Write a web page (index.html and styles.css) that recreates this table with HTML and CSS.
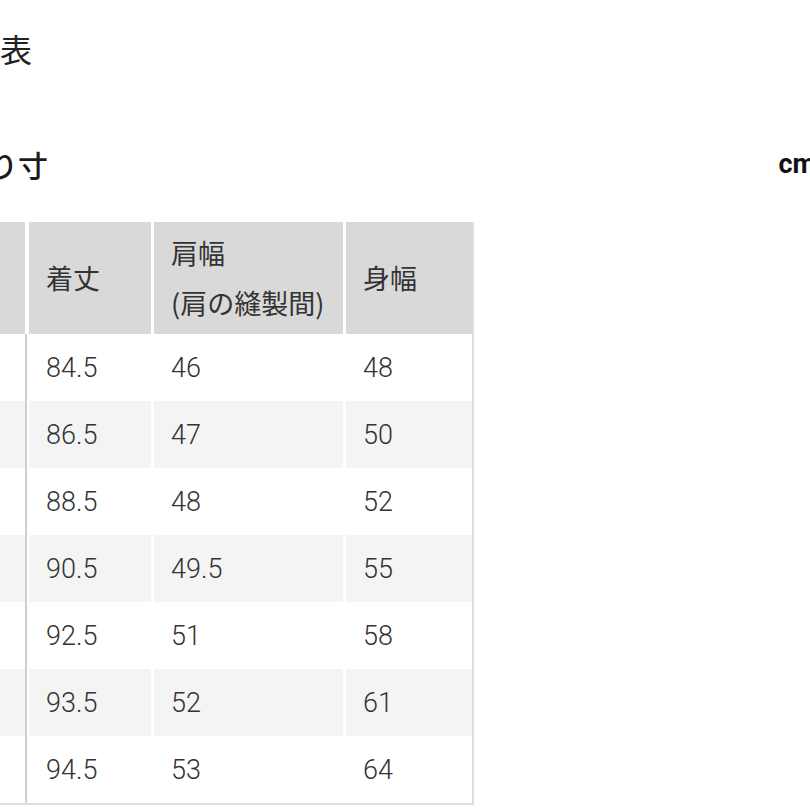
FILE: index.html
```html
<!DOCTYPE html>
<html lang="ja">
<head>
<meta charset="utf-8">
<title>サイズ表</title>
<link rel="stylesheet" href="styles.css">
</head>
<body>
<main class="page">
  <h1 class="title">表</h1>
  <div class="sub">
    <h2 class="sub-title">り寸</h2>
    <span class="unit">cm</span>
  </div>
  <table class="size-table">
    <thead>
      <tr>
        <th class="c0"></th>
        <th class="c1">着丈</th>
        <th class="c2">肩幅<br>(肩の縫製間)</th>
        <th class="c3">身幅</th>
      </tr>
    </thead>
    <tbody>
      <tr><td class="c0"></td><td>84.5</td><td>46</td><td>48</td></tr>
      <tr><td class="c0"></td><td>86.5</td><td>47</td><td>50</td></tr>
      <tr><td class="c0"></td><td>88.5</td><td>48</td><td>52</td></tr>
      <tr><td class="c0"></td><td>90.5</td><td>49.5</td><td>55</td></tr>
      <tr><td class="c0"></td><td>92.5</td><td>51</td><td>58</td></tr>
      <tr><td class="c0"></td><td>93.5</td><td>52</td><td>61</td></tr>
      <tr><td class="c0"></td><td>94.5</td><td>53</td><td>64</td></tr>
    </tbody>
  </table>
</main>
</body>
</html>
```
FILE: styles.css
```css
html, body {
  margin: 0;
  padding: 0;
  background: #fff;
  overflow: hidden;
}

.page {
  width: 810px;
  height: 810px;
  overflow: hidden;
  font-family: "Noto Sans CJK JP", "Noto Sans", sans-serif;
  color: #222;
}

.title {
  margin: 24px 0 0 0;
  font-size: 32px;
  font-weight: 400;
  line-height: 48px;
}

.sub {
  display: flex;
  justify-content: space-between;
  align-items: center;
  margin: 68px -6px 0 0;
  height: 48px;
}

.sub-title {
  margin: 0 0 0 -12px;
  font-size: 30px;
  font-weight: 500;
  line-height: 46px;
  color: #1a1a1a;
}

.unit {
  font-family: Roboto, "Liberation Sans", sans-serif;
  font-weight: 700;
  font-size: 27px;
  line-height: 48px;
  color: #111;
}

.size-table {
  margin-top: 34px;
  border-collapse: separate;
  border-spacing: 0;
  table-layout: fixed;
  width: 474px;
  border-right: 2px solid #dedede;
  border-bottom: 2px solid #dedede;
  font-size: 27px;
  color: #333;
}

.size-table th,
.size-table td {
  box-sizing: border-box;
  padding: 0 0 0 17px;
  text-align: left;
  vertical-align: middle;
  border-left: 3px solid #fff;
}

.size-table th {
  height: 112px;
  background: #d9d9d9;
  font-weight: 400;
  line-height: 50px;
  color: #333;
}

.size-table td {
  height: 67px;
  font-family: Roboto, "Noto Sans", sans-serif;
  font-weight: 300;
  color: #333;
}

.size-table tbody tr:nth-child(even) td {
  background: #f4f4f4;
}

.size-table .c0 {
  width: 27px;
  padding: 0;
  border-left: 0;
  border-right: 2px solid #fff;
}

.size-table td.c0 {
  border-right-color: #cfcfcf;
}

.size-table .c1 {
  width: 124px;
  border-left-width: 2px;
}

.size-table tbody td:nth-child(2) {
  border-left-width: 2px;
}

.size-table .c2 {
  width: 192px;
}

.size-table .c3 {
  width: 129px;
}
```
